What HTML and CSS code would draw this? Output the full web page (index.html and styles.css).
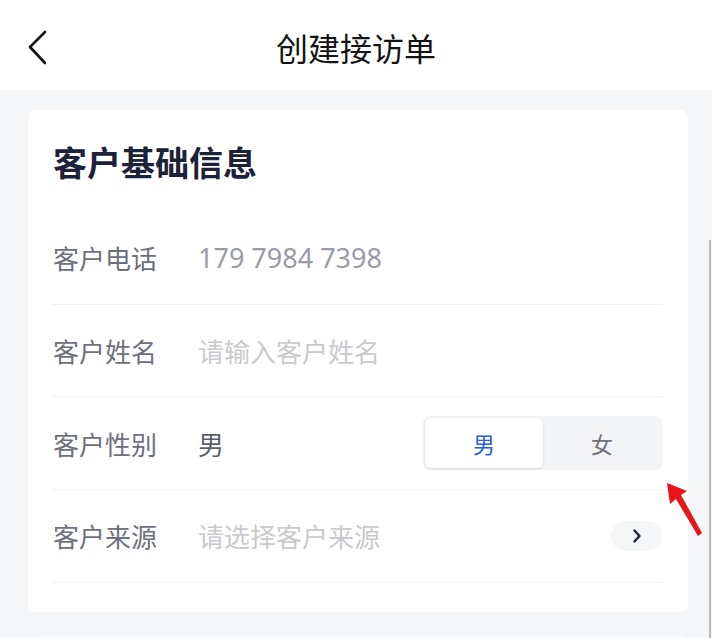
FILE: index.html
```html
<!DOCTYPE html>
<html lang="zh-CN">
<head>
<meta charset="utf-8">
<link rel="stylesheet" href="styles.css">
</head>
<body>
<div class="page">
  <header class="navbar">
    <svg class="back" width="24" height="36" viewBox="0 0 24 36"><path d="M18 2 L3 17 L18 33" fill="none" stroke="#111" stroke-width="2.6" stroke-linecap="round" stroke-linejoin="round"/></svg>
    <div class="nav-title">创建接访单</div>
  </header>
  <main class="content">
    <section class="card">
      <h2 class="card-title">客户基础信息</h2>
      <div class="row">
        <span class="label">客户电话</span>
        <span class="value phone">179 7984 7398</span>
      </div>
      <div class="row">
        <span class="label">客户姓名</span>
        <span class="value placeholder">请输入客户姓名</span>
      </div>
      <div class="row">
        <span class="label">客户性别</span>
        <span class="value filled">男</span>
        <div class="segment">
          <div class="seg-item active">男</div>
          <div class="seg-item">女</div>
        </div>
      </div>
      <div class="row">
        <span class="label">客户来源</span>
        <span class="value placeholder">请选择客户来源</span>
        <div class="chev-btn">
          <svg width="10" height="16" viewBox="0 0 10 16"><path d="M2.5 2.5 L7.5 8 L2.5 13.5" fill="none" stroke="#1e2239" stroke-width="2.4" stroke-linecap="round" stroke-linejoin="round"/></svg>
        </div>
      </div>
    </section>
    <div class="next-card"></div>
  </main>
  <div class="scrollbar"></div>
  <svg class="red-arrow" width="40" height="60" viewBox="0 0 40 60"><path d="M1 1 L21 9 L15 13 L36 51 L32 54 L10 17 L4 22 Z" fill="#e8141b"/></svg>
</div>
</body>
</html>
```

FILE: styles.css
```css
* { box-sizing: border-box; margin: 0; padding: 0; }
html, body { width: 712px; height: 638px; overflow: hidden; }
body {
  font-family: "Noto Sans CJK SC", "Noto Sans", sans-serif;
  background: #f5f6f8;
}
.page { position: relative; width: 712px; height: 638px; }
.navbar {
  height: 90px;
  background: #ffffff;
  display: flex;
  align-items: center;
  justify-content: center;
  position: relative;
}
.back { position: absolute; left: 27px; top: 30px; }
.nav-title {
  font-size: 32px;
  color: #141414;
  line-height: 40px;
  margin-top: 4px;
}
.content { padding: 20px 24px 0 28px; }
.card {
  width: 660px;
  background: #ffffff;
  border-radius: 8px;
  padding: 29px 25px 29px 25px;
}
.card-title {
  font-size: 34px;
  font-weight: 700;
  color: #1e2239;
  line-height: 46px;
  margin-bottom: 27px;
}
.row {
  height: 92.7px;
  display: flex;
  align-items: center;
  border-bottom: 1px solid #eff0f2;
}
.label {
  width: 145px;
  flex: none;
  font-size: 26px;
  color: #6e717c;
}
.value { flex: 1; font-size: 26px; }
.phone { color: #9a9ca5; font-family: "Noto Sans", sans-serif; font-size: 27px; }
.placeholder { color: #c9cacd; }
.filled { color: #5c5f6a; }
.segment {
  width: 240px;
  height: 54px;
  background: #f3f4f6;
  border-radius: 8px;
  display: flex;
  padding: 2px;
}
.seg-item {
  flex: 1;
  display: flex;
  align-items: center;
  justify-content: center;
  font-size: 22px;
  color: #6e717c;
  border-radius: 6px;
}
.seg-item.active {
  background: #ffffff;
  color: #2a63d0;
  box-shadow: 0 1px 3px rgba(0, 0, 0, 0.12);
}
.chev-btn {
  width: 52px;
  height: 30px;
  background: #f5f6f8;
  border-radius: 15px;
  display: flex;
  align-items: center;
  justify-content: center;
}
.next-card {
  margin-top: 23px;
  width: 660px;
  height: 20px;
  background: #f9fafb;
  border-radius: 8px;
}
.scrollbar {
  position: absolute;
  right: 1px;
  top: 240px;
  width: 2px;
  height: 398px;
  background: #b8b9bd;
}
.red-arrow { position: absolute; left: 666px; top: 482px; }
```
